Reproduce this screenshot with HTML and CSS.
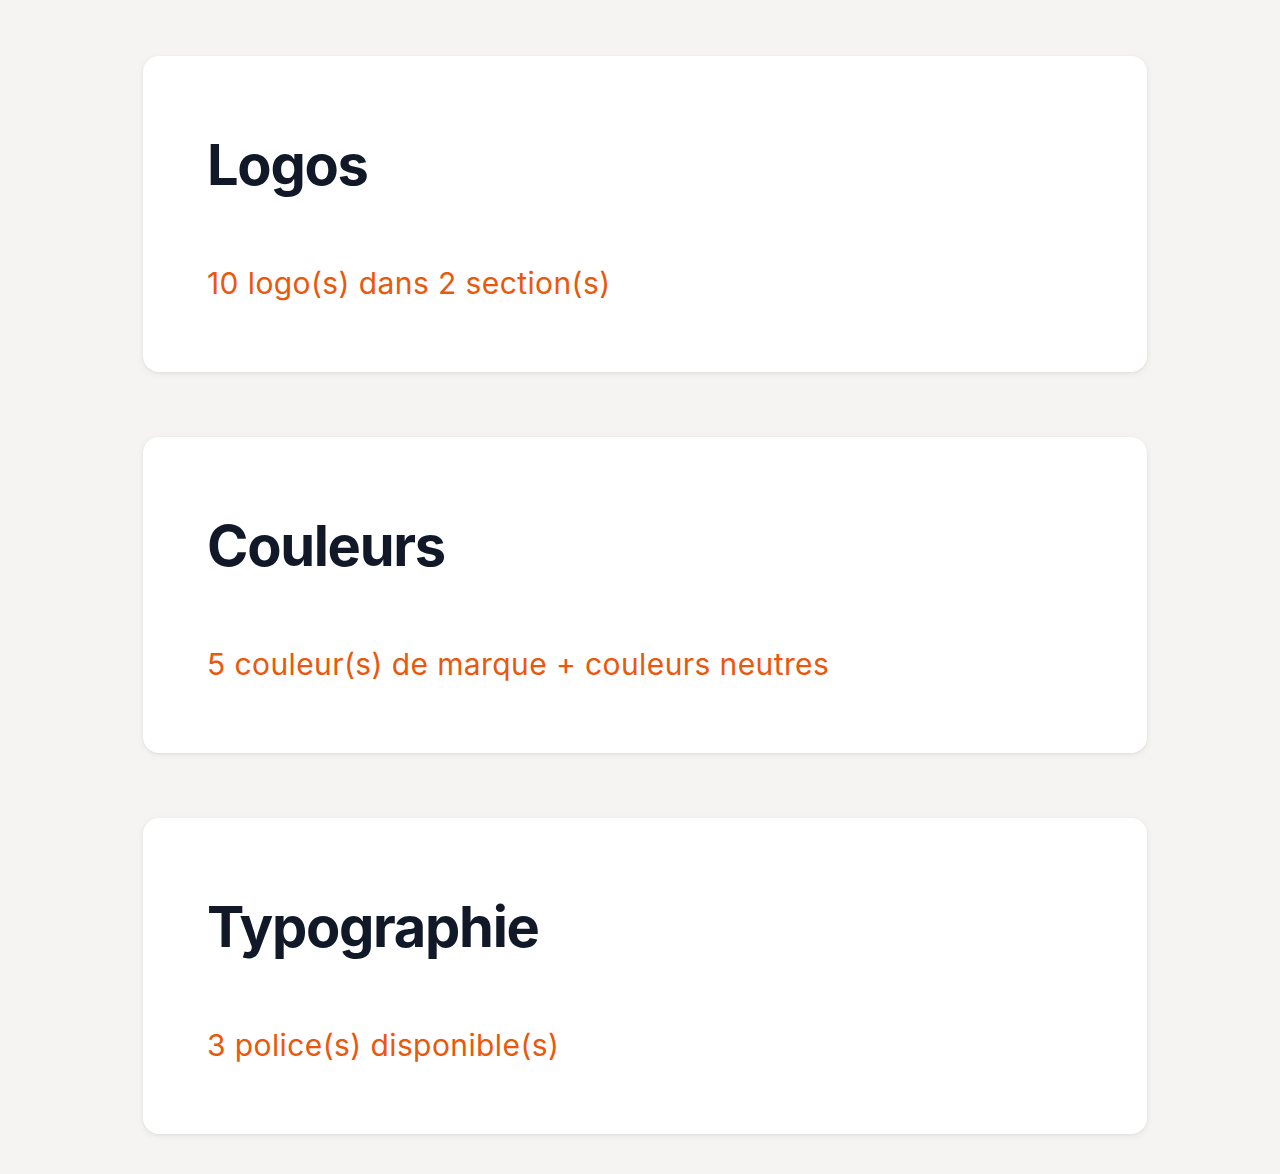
FILE: index.html
```html
<!DOCTYPE html>
<html lang="fr">
<head>
<meta charset="utf-8">
<title>Ressources de marque</title>
<link rel="stylesheet" href="styles.css">
</head>
<body>
<main class="page">
  <section class="card">
    <h2 class="card-title">Logos</h2>
    <p class="card-meta">10 logo(s) dans 2 section(s)</p>
  </section>
  <section class="card">
    <h2 class="card-title">Couleurs</h2>
    <p class="card-meta">5 couleur(s) de marque + couleurs neutres</p>
  </section>
  <section class="card">
    <h2 class="card-title">Typographie</h2>
    <p class="card-meta">3 police(s) disponible(s)</p>
  </section>
</main>
</body>
</html>
```

FILE: styles.css
```css
html, body {
  margin: 0;
  padding: 0;
}
body {
  background: #f5f4f2;
  font-family: Inter, "Noto Sans", sans-serif;
}
.page {
  display: flex;
  flex-direction: column;
  gap: 65px;
  padding: 56px 133px 40px 143px;
}
.card {
  background: #ffffff;
  border-radius: 16px;
  box-shadow: 0 1px 3px rgba(0,0,0,0.06), 0 2px 8px rgba(0,0,0,0.05);
  padding: 76px 64px 64px 64px;
  height: 316px;
  box-sizing: border-box;
}
.card-title {
  margin: 0;
  font-size: 56px;
  line-height: 1.2;
  font-weight: 700;
  color: #111827;
  letter-spacing: -1.3px;
}
.card-meta {
  margin: 63px 0 0;
  font-size: 30px;
  line-height: 1.4;
  color: #ea580c;
  letter-spacing: 0.4px;
}
```
